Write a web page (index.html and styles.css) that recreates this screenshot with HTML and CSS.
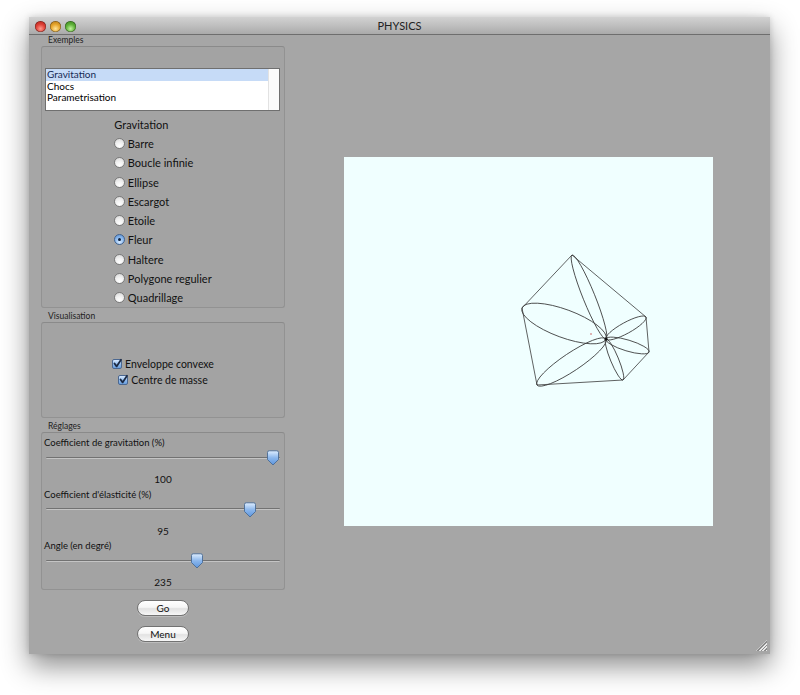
FILE: index.html
```html
<!DOCTYPE html>
<html>
<head>
<meta charset="utf-8">
<title>PHYSICS</title>
<link rel="stylesheet" href="styles.css">
</head>
<body>
<div class="window">
  <div class="titlebar">
    <div class="lights">
      <span class="light red"></span>
      <span class="light yellow"></span>
      <span class="light green"></span>
    </div>
    <div class="title">PHYSICS</div>
  </div>
  <div class="content">
    <div class="side">
      <div class="group-label first">Exemples</div>
      <div class="group box-examples">
        <div class="list">
          <div class="list-items">
            <div class="item selected">Gravitation</div>
            <div class="item">Chocs</div>
            <div class="item">Parametrisation</div>
          </div>
          <div class="scroll"></div>
        </div>
        <div class="radios">
          <div class="radio-title">Gravitation</div>
          <div class="radio"><span class="rb"></span>Barre</div>
          <div class="radio"><span class="rb"></span>Boucle infinie</div>
          <div class="radio"><span class="rb"></span>Ellipse</div>
          <div class="radio"><span class="rb"></span>Escargot</div>
          <div class="radio"><span class="rb"></span>Etoile</div>
          <div class="radio"><span class="rb on"></span>Fleur</div>
          <div class="radio"><span class="rb"></span>Haltere</div>
          <div class="radio"><span class="rb"></span>Polygone regulier</div>
          <div class="radio"><span class="rb"></span>Quadrillage</div>
        </div>
      </div>

      <div class="group-label">Visualisation</div>
      <div class="group box-visu">
        <div class="check"><span class="cb"><svg viewBox="0 0 11 11" width="11" height="11"><path d="M2.5 5.5 L4.6 8.4 L9 1.8" fill="none" stroke="#1c2a44" stroke-width="1.8" stroke-linecap="round" stroke-linejoin="round"/></svg></span>Enveloppe convexe</div>
        <div class="check"><span class="cb"><svg viewBox="0 0 11 11" width="11" height="11"><path d="M2.5 5.5 L4.6 8.4 L9 1.8" fill="none" stroke="#1c2a44" stroke-width="1.8" stroke-linecap="round" stroke-linejoin="round"/></svg></span>Centre de masse</div>
      </div>

      <div class="group-label">Réglages</div>
      <div class="group box-settings">
        <div class="setting">
          <div class="setting-label">Coefficient de gravitation (%)</div>
          <div class="slider"><div class="track"></div><span class="thumb" style="left: 227px"><svg viewBox="0 0 14 16" width="14" height="16"><defs><linearGradient id="tg1" x1="0" y1="0" x2="0" y2="1"><stop offset="0" stop-color="#dfeeff"/><stop offset="0.5" stop-color="#8ab6ec"/><stop offset="1" stop-color="#5d95dc"/></linearGradient></defs><path d="M1.5 2.5 Q1.5 0.8 3.2 0.8 L10.8 0.8 Q12.5 0.8 12.5 2.5 L12.5 9.5 L7 15 L1.5 9.5 Z" fill="url(#tg1)" stroke="#4a6b94" stroke-width="0.9"/></svg></span></div>
          <div class="setting-value">100</div>
        </div>
        <div class="setting">
          <div class="setting-label">Coefficient d'élasticité (%)</div>
          <div class="slider"><div class="track"></div><span class="thumb" style="left: 204px"><svg viewBox="0 0 14 16" width="14" height="16"><path d="M1.5 2.5 Q1.5 0.8 3.2 0.8 L10.8 0.8 Q12.5 0.8 12.5 2.5 L12.5 9.5 L7 15 L1.5 9.5 Z" fill="url(#tg1)" stroke="#4a6b94" stroke-width="0.9"/></svg></span></div>
          <div class="setting-value">95</div>
        </div>
        <div class="setting">
          <div class="setting-label">Angle (en degré)</div>
          <div class="slider"><div class="track"></div><span class="thumb" style="left: 151px"><svg viewBox="0 0 14 16" width="14" height="16"><path d="M1.5 2.5 Q1.5 0.8 3.2 0.8 L10.8 0.8 Q12.5 0.8 12.5 2.5 L12.5 9.5 L7 15 L1.5 9.5 Z" fill="url(#tg1)" stroke="#4a6b94" stroke-width="0.9"/></svg></span></div>
          <div class="setting-value">235</div>
        </div>
      </div>

      <div class="buttons">
        <button class="btn">Go</button>
        <button class="btn">Menu</button>
      </div>
    </div>

    <div class="stage">
      <div class="canvas">
        <svg viewBox="0 0 369 369" width="369" height="369">
          <g fill="none" stroke="#3a3a3a" stroke-width="0.8">
            <polygon points="228,98 302,160 305,195 279,223 193,228 178,151"/>
            <ellipse cx="220" cy="166.5" rx="44.8" ry="14" transform="rotate(20.3 220 166.5)"/>
            <ellipse cx="245" cy="140" rx="45.3" ry="6" transform="rotate(68 245 140)"/>
            <ellipse cx="282" cy="171" rx="22.8" ry="5.5" transform="rotate(-28.8 282 171)"/>
            <ellipse cx="283.5" cy="188.5" rx="22.5" ry="5.5" transform="rotate(16.8 283.5 188.5)"/>
            <ellipse cx="270.5" cy="202.5" rx="22.2" ry="4" transform="rotate(67.5 270.5 202.5)"/>
            <ellipse cx="227.5" cy="205" rx="41.5" ry="9" transform="rotate(146.3 227.5 205)"/>
          </g>
          <circle cx="262" cy="182" r="1.6" fill="#111"/>
          <circle cx="247" cy="177" r="0.7" fill="#c03030"/>
        </svg>
      </div>
    </div>
  </div>
  <div class="grip"></div>
</div>
</body>
</html>
```

FILE: styles.css
```css
html, body {
  margin: 0;
  padding: 0;
  background: #ffffff;
}

body {
  width: 800px;
  height: 695px;
  overflow: hidden;
  font-family: Lato, "DejaVu Sans", sans-serif;
  color: #111;
}

.window {
  position: relative;
  margin-left: 29px;
  margin-top: 17px;
  width: 741px;
  height: 637px;
  background: #a6a6a6;
  box-shadow: 0 12px 26px rgba(0, 0, 0, 0.45), 0 0 6px rgba(0, 0, 0, 0.15);
  display: flex;
  flex-direction: column;
}

.titlebar {
  position: relative;
  height: 17px;
  flex: none;
  background: linear-gradient(#d2d2d2, #bdbdbd 55%, #aaaaaa);
  border-bottom: 1px solid #6e6e6e;
  display: flex;
  align-items: center;
}

.lights {
  display: flex;
  gap: 4px;
  padding-left: 6px;
  padding-top: 1px;
}

.light {
  width: 11px;
  height: 11px;
  border-radius: 50%;
  box-shadow: inset 0 0 0 0.5px rgba(0, 0, 0, 0.45);
}

.red { background: radial-gradient(circle at 50% 70%, #ff9b8e 0%, #e0443a 45%, #a5160f 100%); }
.yellow { background: radial-gradient(circle at 50% 70%, #ffe59a 0%, #e7a72f 45%, #a86a0b 100%); }
.green { background: radial-gradient(circle at 50% 70%, #c4f59f 0%, #62b43b 45%, #2c7411 100%); }

.title {
  position: absolute;
  left: 0;
  right: 0;
  top: 0;
  text-align: center;
  font-size: 11px;
  line-height: 17px;
  color: #222;
}

.content {
  flex: 1;
  display: flex;
}

.side {
  width: 244px;
  padding-left: 12px;
  flex: none;
  display: flex;
  flex-direction: column;
}

.group-label {
  font-size: 8.5px;
  line-height: 11px;
  padding-left: 7px;
  padding-top: 3px;
  color: #222;
}

.group-label.first {
  padding-top: 0;
}

.group {
  border: 1px solid #929292;
  border-top-color: #8a8a8a;
  border-radius: 3px;
  background: #a3a3a3;
  box-sizing: border-box;
}

.box-examples {
  height: 262px;
  padding-top: 21px;
}

.list {
  margin-left: 3px;
  margin-right: 4px;
  height: 43px;
  box-sizing: border-box;
  border: 1px solid #6f6f6f;
  background: #fff;
  display: flex;
}

.list-items {
  flex: 1;
  padding-top: 0;
}

.item {
  font-size: 10px;
  line-height: 11.5px;
  padding-left: 1px;
  color: #000;
}

.item.selected {
  background: #c6dbf7;
  color: #152a55;
}

.scroll {
  width: 10px;
  border-left: 1px solid #e2e2e2;
  background: #fbfbfb;
}

.radios {
  margin-top: 5px;
  align-self: center;
  display: flex;
  flex-direction: column;
  width: fit-content;
  margin-left: auto;
  margin-right: auto;
}

.radio-title {
  font-size: 11px;
  line-height: 18px;
  color: #111;
}

.radio {
  display: flex;
  align-items: center;
  gap: 2.5px;
  height: 19.25px;
  font-size: 11px;
  color: #111;
}

.rb {
  width: 11px;
  height: 11px;
  border-radius: 50%;
  box-sizing: border-box;
  border: 1px solid #7a7a7a;
  background: radial-gradient(circle at 50% 80%, #ffffff 0%, #f3f3f3 40%, #d6d6d6 100%);
  display: flex;
  align-items: center;
  justify-content: center;
  flex: none;
}

.rb.on {
  border-color: #40628f;
  background: radial-gradient(circle at 50% 80%, #d7eaff 0%, #8ebbef 50%, #5a8fd2 100%);
}

.rb.on::after {
  content: "";
  width: 3px;
  height: 3px;
  border-radius: 50%;
  background: #10203a;
}

.box-visu {
  height: 96px;
  padding-top: 4px;
  display: flex;
  flex-direction: column;
  justify-content: center;
  align-items: center;
}

.check {
  display: flex;
  align-items: center;
  gap: 3px;
  height: 16px;
  font-size: 10.5px;
  color: #111;
}

.cb {
  width: 10px;
  height: 10px;
  box-sizing: border-box;
  border: 1px solid #4a6791;
  border-radius: 2px;
  background: linear-gradient(#d9eaff, #8fbbee 55%, #6a9edd);
  display: flex;
  align-items: center;
  justify-content: center;
  overflow: visible;
}

.cb svg {
  flex: none;
  margin-top: -2px;
  margin-left: 1px;
}

.box-settings {
  height: 158px;
  padding-top: 3px;
  overflow: hidden;
}

.setting-label {
  font-size: 9.5px;
  line-height: 13px;
  padding-left: 2px;
  color: #111;
}

.slider {
  position: relative;
  height: 17px;
  margin: 0 4px 0 4px;
  display: flex;
  align-items: center;
}

.track {
  width: 100%;
  height: 1px;
  background: #727272;
  border-bottom: 1px solid #c4c4c4;
  border-radius: 1px;
}

.thumb {
  position: absolute;
  top: 1px;
  width: 14px;
  height: 16px;
  margin-left: -7px;
}

.thumb svg {
  display: block;
}

.setting-value {
  text-align: center;
  font-size: 10px;
  line-height: 13px;
  padding-top: 7px;
  padding-bottom: 1.5px;
  color: #111;
}

.buttons {
  display: flex;
  flex-direction: column;
  align-items: center;
  gap: 10px;
  padding-top: 10px;
}

.btn {
  width: 52px;
  height: 16px;
  padding: 0;
  border: 1px solid #727272;
  border-radius: 8px;
  background: linear-gradient(#ffffff, #f6f6f6 45%, #e2e2e2 55%, #f7f7f7);
  box-shadow: 0 1px 0 rgba(255, 255, 255, 0.25);
  font-family: Lato, "DejaVu Sans", sans-serif;
  font-size: 10px;
  font-weight: normal;
  line-height: 14px;
  color: #111;
}

.stage {
  flex: 1;
  display: flex;
  align-items: center;
  justify-content: center;
  padding-left: 2px;
  padding-bottom: 6px;
}

.canvas {
  width: 369px;
  height: 369px;
  background: #f0ffff;
}

.canvas svg {
  display: block;
}

.grip {
  position: absolute;
  right: 3px;
  bottom: 3px;
  width: 11px;
  height: 11px;
  background: repeating-linear-gradient(135deg, #e8e8e8 0 1.2px, #8a8a8a 1.2px 2.4px);
  clip-path: polygon(100% 0, 100% 100%, 0 100%);
}
```
